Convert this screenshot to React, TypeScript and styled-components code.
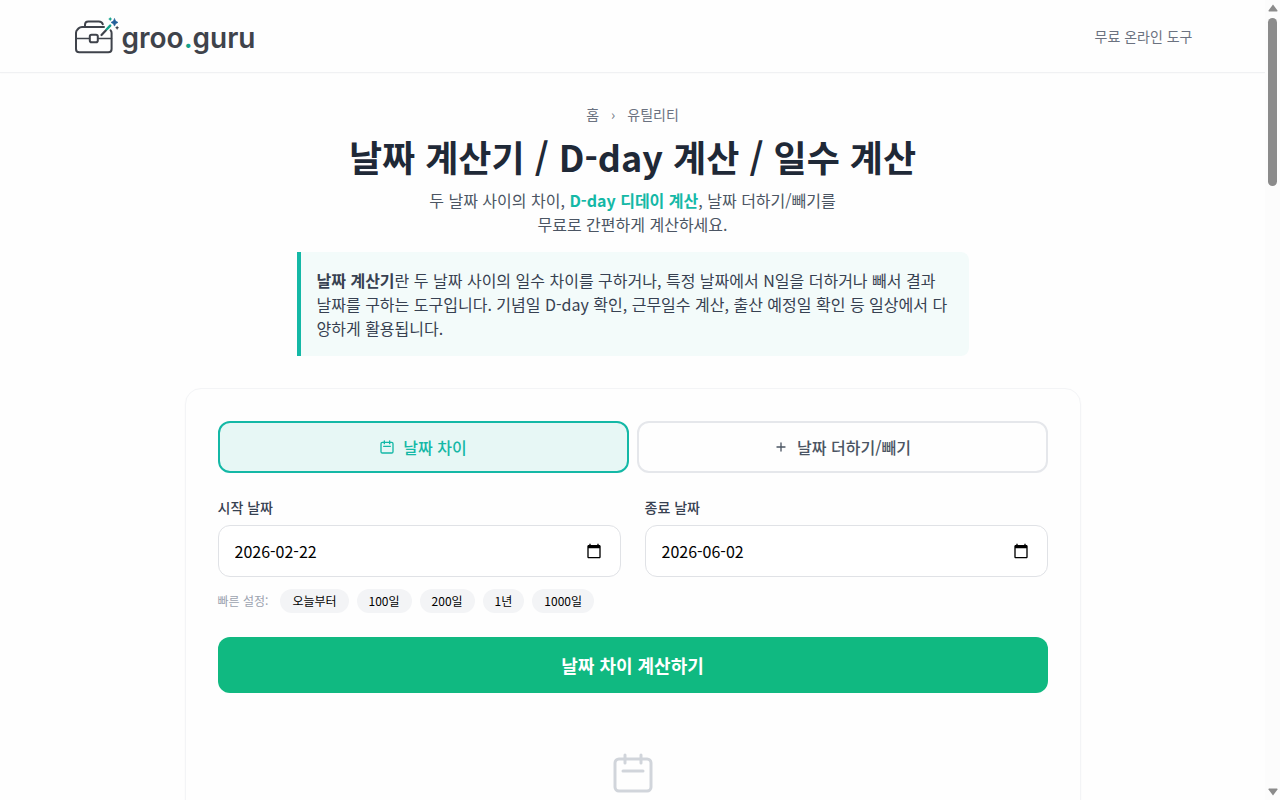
import React, { useRef, useState } from "react";
import styled, { createGlobalStyle } from "styled-components";

const GlobalStyle = createGlobalStyle`
  *, *::before, *::after { box-sizing: border-box; }
  body {
    margin: 0;
    background: #fefefe;
    color: #1f2937;
    font-family: "Noto Sans CJK KR", "Noto Sans", sans-serif;
    font-size: 16px;
    line-height: 24px;
  }
  h1, p { margin: 0; }
  button, input { font-family: inherit; }
`;

const Shell = styled.div`
  height: 100vh;
  overflow: hidden;
  padding-right: 15px;
`;

const Header = styled.header`
  background: #fefefe;
  box-shadow: 0 1px 0 #f0f1f3, 0 1px 2px rgba(0, 0, 0, 0.04);
`;

const HeaderInner = styled.div`
  max-width: 1152px;
  margin: 0 auto;
  padding: 16px;
  display: flex;
  align-items: center;
  justify-content: space-between;
`;

const LogoLink = styled.a`
  display: flex;
  align-items: center;
  gap: 1px;
  height: 40px;
  color: #3f434b;
  text-decoration: none;
`;

const Wordmark = styled.span`
  padding-top: 4px;
  font-family: Inter, sans-serif;
  font-size: 28px;
  line-height: 36px;
  font-weight: 600;
`;

const Dot = styled.span`
  color: #14a38b;
`;

const HeaderLink = styled.a`
  font-size: 14px;
  line-height: 20px;
  color: #6b7280;
  text-decoration: none;
`;

const Main = styled.main`
  max-width: 928px;
  margin: 0 auto;
  padding: 32px 16px;
`;

const Intro = styled.section`
  text-align: center;
  margin-bottom: 32px;
`;

const Breadcrumb = styled.nav`
  display: flex;
  justify-content: center;
  gap: 12px;
  margin-bottom: 12px;
  font-size: 14px;
  line-height: 20px;
  color: #6b7280;
`;

const Crumb = styled.a`
  color: inherit;
  text-decoration: none;
`;

const Title = styled.h1`
  font-size: 36px;
  line-height: 40px;
  font-weight: 700;
  margin-bottom: 12px;
`;

const Subtitle = styled.p`
  color: #4b5563;
  margin-bottom: 16px;
`;

const Accent = styled.strong`
  color: #14b8a6;
  font-weight: 700;
`;

const Definition = styled.p`
  max-width: 672px;
  margin: 0 auto;
  padding: 16px;
  text-align: left;
  color: #374151;
  background: #f3fbfa;
  border-left: 4px solid #14b8a6;
  border-radius: 0 8px 8px 0;
`;

const Card = styled.section`
  border: 1px solid #f3f4f6;
  border-radius: 16px;
  padding: 32px;
  box-shadow: 0 1px 2px rgba(0, 0, 0, 0.03);
`;

const Tabs = styled.div`
  display: grid;
  grid-template-columns: 1fr 1fr;
  gap: 8px;
  margin-bottom: 24px;
`;

const Tab = styled.button<{ $active: boolean }>`
  display: flex;
  align-items: center;
  justify-content: center;
  gap: 8px;
  padding: 12px 16px;
  font-size: 16px;
  line-height: 24px;
  font-weight: 500;
  border-radius: 12px;
  border: 2px solid ${(p) => (p.$active ? "#14b8a6" : "#e5e7eb")};
  background: ${(p) => (p.$active ? "#e7f7f5" : "transparent")};
  color: ${(p) => (p.$active ? "#14b8a6" : "#4b5563")};
  cursor: pointer;
`;

const Fields = styled.div`
  display: grid;
  grid-template-columns: 1fr 1fr;
  gap: 24px;
  margin-bottom: 12px;
`;

const Field = styled.div`
  display: flex;
  flex-direction: column;
  gap: 8px;
`;

const Label = styled.label`
  font-size: 14px;
  line-height: 20px;
  font-weight: 500;
  color: #374151;
`;

const DateBox = styled.div`
  display: flex;
  align-items: center;
  height: 52px;
  padding: 0 16px;
  background: #fff;
  border: 1px solid #e0e2e6;
  border-radius: 12px;
`;

const DateInput = styled.input`
  flex: 1;
  min-width: 0;
  height: 24px;
  padding: 0;
  font-size: 16px;
  line-height: 24px;
  color: #000;
  background: transparent;
  border: 0;
  outline: 0;
`;

const PickerButton = styled.button`
  display: flex;
  padding: 2px;
  color: #000;
  background: transparent;
  border: 0;
  cursor: pointer;
`;

const Quick = styled.div`
  display: flex;
  align-items: center;
  gap: 8px;
  margin-bottom: 24px;
  font-size: 12px;
  line-height: 16px;
`;

const QuickLabel = styled.span`
  color: #9ca3af;
  padding-right: 4px;
`;

const Chip = styled.button`
  padding: 4px 12px;
  font-size: 12px;
  line-height: 16px;
  color: #000;
  background: #f3f4f6;
  border: 0;
  border-radius: 12px;
  cursor: pointer;
`;

const Submit = styled.button`
  display: block;
  width: 100%;
  padding: 14px 24px;
  font-size: 18px;
  line-height: 28px;
  font-weight: 700;
  color: #fff;
  background: #10b981;
  border: 0;
  border-radius: 12px;
  cursor: pointer;
`;

const Empty = styled.div`
  display: flex;
  justify-content: center;
  padding: 56px 0 80px;
  color: #d1d5db;
`;

const ScrollTrack = styled.div`
  position: fixed;
  top: 0;
  right: 0;
  bottom: 0;
  width: 15px;
  padding: 4px 3px;
  display: flex;
  flex-direction: column;
  align-items: center;
  gap: 6px;
  background: #fcfcfc;
  color: #8b8b8b;
`;

const ScrollThumb = styled.div`
  width: 9px;
  height: 21vh;
  border-radius: 5px;
  background: #8b8b8b;
`;

const ScrollEnd = styled.div`
  display: flex;
  margin-top: auto;
`;

function Toolbox() {
  return (
    <svg width="48" height="40" viewBox="73 16 48 40" fill="none" stroke="#3f434b" strokeWidth="2" strokeLinecap="round" strokeLinejoin="round" aria-hidden="true">
      <path d="M104 27H82q-2 0-3.300 1.300l-1.400 1.500Q76 31 76 33v16q0 3.300 3.300 3.300h29q3.300 0 3.300-3.300V33q0-1.500-1-2.700" />
      <path d="M85 27v-2.200q0-3.300 3.300-3.300h10.500q3.200 0 4 2.800" />
      <path d="M76 38.500h13.500M98 38.500h13.500" strokeWidth="1.500" />
      <rect x="89.800" y="34.800" width="8" height="7.400" rx="1.800" />
      <path d="M101.500 35l4.500-4.800" strokeWidth="2.200" />
      <path d="M106.800 29.200l3.400-3.600" stroke="#14a38b" strokeWidth="2.400" />
      <g stroke="none">
        <path d="M114.500 18.800q.6 3 3.500 3.600-2.900.6-3.500 3.700-.6-3.100-3.500-3.700 2.900-.6 3.500-3.600z" fill="#235f99" stroke="#235f99" strokeWidth=".6" />
        <path d="M110.200 17q.4 1.700 2 2.100-1.600.4-2 2.100-.4-1.700-2-2.100 1.600-.4 2-2.100z" fill="#14a38b" />
        <path d="M117.100 25.700q.4 1.700 2 2.100-1.600.4-2 2.100-.4-1.700-2-2.100 1.600-.4 2-2.100z" fill="#3f434b" />
      </g>
    </svg>
  );
}

function CalendarIcon({ size, weight }: { size: number; weight: number }) {
  return (
    <svg width={size} height={size} viewBox="0 0 24 24" fill="none" stroke="currentColor" strokeWidth={weight} strokeLinecap="round" strokeLinejoin="round" aria-hidden="true">
      <path d="M8 7V3m8 4V3m-9 8h10M5 21h14a2 2 0 002-2V7a2 2 0 00-2-2H5a2 2 0 00-2 2v12a2 2 0 002 2z" />
    </svg>
  );
}

function PlusIcon() {
  return (
    <svg width="16" height="16" viewBox="0 0 24 24" fill="none" stroke="currentColor" strokeWidth="2" strokeLinecap="round" aria-hidden="true">
      <path d="M12 6v12M6 12h12" />
    </svg>
  );
}

function PickerIcon() {
  return (
    <svg width="16" height="16" viewBox="0 0 24 24" fill="currentColor" aria-hidden="true">
      <path d="M20 3h-1V1h-2v2H7V1H5v2H4c-1.100 0-2 .9-2 2v16c0 1.100.9 2 2 2h16c1.100 0 2-.9 2-2V5c0-1.100-.9-2-2-2zm0 18H4V8h16v13z" />
    </svg>
  );
}

function DateField({ id, label, initial }: { id: string; label: string; initial: string }) {
  const [value, setValue] = useState(initial);
  const input = useRef<HTMLInputElement>(null);
  return (
    <Field>
      <Label htmlFor={id}>{label}</Label>
      <DateBox>
        <DateInput ref={input} id={id} type="text" inputMode="numeric" value={value} onChange={(e) => setValue(e.target.value)} />
        <PickerButton type="button" aria-label={label + " 선택"} onClick={() => input.current?.focus()}>
          <PickerIcon />
        </PickerButton>
      </DateBox>
    </Field>
  );
}

const presets = ["오늘부터", "100일", "200일", "1년", "1000일"];

export default function App() {
  const [mode, setMode] = useState<"diff" | "add">("diff");

  return (
    <Shell lang="ko">
      <GlobalStyle />
      <Header>
        <HeaderInner>
          <LogoLink href="#" aria-label="groo.guru">
            <Toolbox />
            <Wordmark>
              groo<Dot>.</Dot>guru
            </Wordmark>
          </LogoLink>
          <HeaderLink href="#tools">무료 온라인 도구</HeaderLink>
        </HeaderInner>
      </Header>
      <Main>
        <Intro>
          <Breadcrumb aria-label="breadcrumb">
            <Crumb href="#home">홈</Crumb>
            <span>›</span>
            <Crumb href="#utility">유틸리티</Crumb>
          </Breadcrumb>
          <Title>날짜 계산기 / D-day 계산 / 일수 계산</Title>
          <Subtitle>
            두 날짜 사이의 차이, <Accent>D-day 디데이 계산</Accent>, 날짜 더하기/빼기를
            <br />
            무료로 간편하게 계산하세요.
          </Subtitle>
          <Definition>
            <strong>날짜 계산기</strong>란 두 날짜 사이의 일수 차이를 구하거나, 특정 날짜에서 N일을 더하거나 빼서 결과 날짜를 구하는 도구입니다. 기념일 D-day 확인, 근무일수 계산, 출산 예정일 확인 등 일상에서 다양하게 활용됩니다.
          </Definition>
        </Intro>
        <Card>
          <Tabs>
            <Tab type="button" $active={mode === "diff"} onClick={() => setMode("diff")}>
              <CalendarIcon size={16} weight={2} />
              날짜 차이
            </Tab>
            <Tab type="button" $active={mode === "add"} onClick={() => setMode("add")}>
              <PlusIcon />
              날짜 더하기/빼기
            </Tab>
          </Tabs>
          <Fields>
            <DateField id="start" label="시작 날짜" initial="2026-02-22" />
            <DateField id="end" label="종료 날짜" initial="2026-06-02" />
          </Fields>
          <Quick>
            <QuickLabel>빠른 설정:</QuickLabel>
            {presets.map((name) => (
              <Chip type="button" key={name}>
                {name}
              </Chip>
            ))}
          </Quick>
          <Submit type="button">날짜 차이 계산하기</Submit>
          <Empty>
            <CalendarIcon size={48} weight={1.5} />
          </Empty>
        </Card>
      </Main>
      <ScrollTrack aria-hidden="true">
        <svg width="10" height="8" viewBox="0 0 10 8" fill="currentColor">
          <path d="M5 .5L9.500 6.500Q9.700 7.500 8.800 7.500H1.200Q.3 7.500.5 6.500z" />
        </svg>
        <ScrollThumb />
        <ScrollEnd>
          <svg width="10" height="8" viewBox="0 0 10 8" fill="currentColor">
            <path d="M5 7.500L9.500 1.500Q9.700.5 8.800.5H1.200Q.3.500.5 1.500z" />
          </svg>
        </ScrollEnd>
      </ScrollTrack>
    </Shell>
  );
}
